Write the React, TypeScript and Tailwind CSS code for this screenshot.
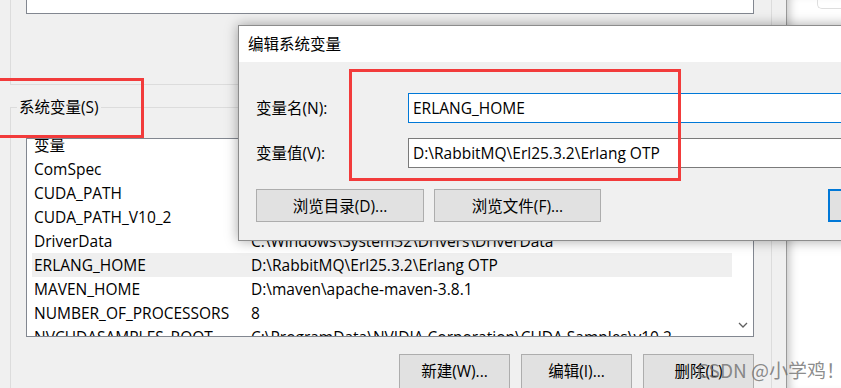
import React from "react";

const rows: [string, string][] = [
  ["ComSpec", "C:\\Windows\\system32\\cmd.exe"],
  ["CUDA_PATH", "C:\\Program Files\\NVIDIA GPU Computing Toolkit\\CUDA\\v10.2"],
  ["CUDA_PATH_V10_2", "C:\\Program Files\\NVIDIA GPU Computing Toolkit\\CUDA\\v10.2"],
  ["DriverData", "C:\\Windows\\System32\\Drivers\\DriverData"],
  ["ERLANG_HOME", "D:\\RabbitMQ\\Erl25.3.2\\Erlang OTP"],
  ["MAVEN_HOME", "D:\\maven\\apache-maven-3.8.1"],
  ["NUMBER_OF_PROCESSORS", "8"],
  ["NVCUDASAMPLES_ROOT", "C:\\ProgramData\\NVIDIA Corporation\\CUDA Samples\\v10.2"],
];

export default function App() {
  return (
    <div className="relative w-[841px] h-[388px] overflow-hidden bg-[#f0f0f0] flex font-['Open_Sans','Noto_Sans_CJK_SC',sans-serif] text-[15.5px] leading-[20px] text-black">
      {/* environment variables window */}
      <div className="w-[787px] flex-none border-r border-[#9a9a9a] pl-[10px] flex flex-col">
        {/* user variables group (bottom part) */}
        <div className="w-[762px] h-[85px] flex-none border-l border-r border-b border-[#dcdcdc]">
          <div className="ml-[15px] w-[728px] h-[14px] bg-white border-l border-r border-b border-[#828790]" />
        </div>
        {/* system variables group */}
        <fieldset className="mt-[12px] w-[762px] flex-1 border border-[#dcdcdc] pt-[21px]">
          <legend className="ml-[6px] px-[2px] leading-[20px]">系统变量(S)</legend>
          <div className="ml-[15px] w-[728px] h-[199px] bg-white border border-[#828790] overflow-hidden flex">
            <div className="w-[705px] flex-none pl-[5px] flex flex-col">
              <div className="-mt-[6px] h-[24px] flex items-center flex-none">
                <span className="pl-[2px] w-[219px] flex-none">变量</span>
                <span>值</span>
              </div>
              {rows.map(([k, v]) => (
                <div
                  key={k}
                  className={
                    "h-[24px] flex items-center flex-none whitespace-nowrap " +
                    (k === "ERLANG_HOME" ? "bg-[#efefef]" : "")
                  }
                >
                  <span className="pl-[2px] w-[219px] flex-none">{k}</span>
                  <span>{v}</span>
                </div>
              ))}
            </div>
            <div className="flex-1 flex flex-col justify-end items-center pb-[8px] pl-[1px]">
              <svg width="10" height="6" viewBox="0 0 10 6">
                <path d="M1 1 L5 5 L9 1" fill="none" stroke="#606060" strokeWidth="1.3" />
              </svg>
            </div>
          </div>
          <div className="mt-[17px] flex justify-end gap-[11px] pr-[17px]">
            {["新建(W)...", "编辑(I)...", "删除(L)"].map((t) => (
              <div
                key={t}
                className="w-[111px] h-[36px] flex-none bg-[#e1e1e1] border border-[#adadad] flex justify-center pt-[6px]"
              >
                {t}
              </div>
            ))}
          </div>
        </fieldset>
      </div>

      {/* window behind on the right */}
      <div className="flex-1 bg-white shadow-[inset_9px_0_8px_-6px_rgba(0,0,0,0.22)]">
        <div className="ml-[30px] h-[9px] border-l border-b border-[#dedede] rounded-bl-[5px]" />
      </div>

      {/* edit dialog */}
      <div className="absolute left-[238px] top-[25px] w-[620px] h-[216px] border border-[#8c8c8c] shadow-[0_0_12px_rgba(0,0,0,0.35)] flex flex-col bg-[#f0f0f0]">
        <div className="h-[36px] bg-white flex items-center pl-[9px] flex-none">编辑系统变量</div>
        <div className="flex-1 pl-[17px] pt-[31px] flex flex-col">
          <div className="flex items-center">
            <span className="w-[152px] flex-none">变量名(N):</span>
            <div className="flex-1 h-[30px] bg-white border border-[#0078d7] flex items-center pl-[4px]">
              ERLANG_HOME
            </div>
          </div>
          <div className="flex items-center mt-[15px]">
            <span className="w-[152px] flex-none">变量值(V):</span>
            <div className="flex-1 h-[30px] bg-white border border-[#7a7a7a] flex items-center pl-[4px] whitespace-nowrap">
              D:\RabbitMQ\Erl25.3.2\Erlang OTP
            </div>
          </div>
          <div className="flex mt-[21px]">
            <div className="w-[168px] h-[33px] flex-none bg-[#e1e1e1] border border-[#adadad] flex items-center justify-center">
              浏览目录(D)...
            </div>
            <div className="ml-[10px] w-[167px] h-[33px] flex-none bg-[#e1e1e1] border border-[#adadad] flex items-center justify-center">
              浏览文件(F)...
            </div>
            <div className="ml-[227px] w-[80px] h-[33px] flex-none bg-[#e1e1e1] border-2 border-[#0078d7]" />
          </div>
        </div>
      </div>

      {/* annotations */}
      <div className="absolute -left-[5px] top-[78px] w-[149px] h-[60px] border-[3px] border-[#f23b3b]" />
      <div className="absolute left-[349px] top-[69px] w-[332px] h-[112px] border-[3px] border-[#f23b3b]" />

      {/* watermark */}
      <div className="absolute left-[697px] top-[358px] font-['Noto_Sans_CJK_SC',sans-serif] text-[19px] leading-[24px] text-[rgba(110,110,110,0.8)] whitespace-nowrap">
        CSDN @小学鸡！
      </div>
    </div>
  );
}
